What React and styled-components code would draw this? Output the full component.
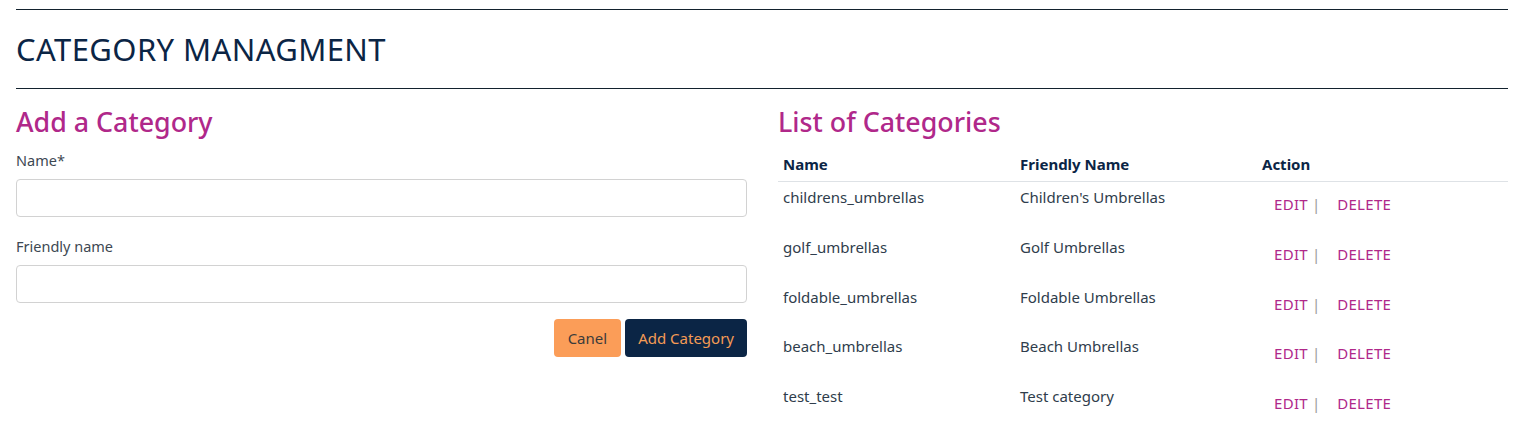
import React from "react";
import styled, { createGlobalStyle } from "styled-components";

const GlobalStyle = createGlobalStyle`
  body {
    margin: 0;
    background: #ffffff;
    font-family: "Noto Sans", "Open Sans", sans-serif;
    color: #2b3a4a;
  }
`;

const Page = styled.div`
  width: 1492px;
  margin-left: 16px;
  padding-top: 9px;
`;

const Rule = styled.hr`
  margin: 0;
  border: 0;
  border-top: 1px solid #13222e;
`;

const Title = styled.h2`
  margin: 0;
  height: 78px;
  display: flex;
  align-items: center;
  font-size: 31px;
  font-weight: 400;
  color: #0b2545;
  letter-spacing: 0.4px;
`;

const Columns = styled.div`
  display: grid;
  grid-template-columns: 731px 730px;
  column-gap: 31px;
  padding-top: 16px;
`;

const Heading = styled.h3`
  margin: 0 0 ${(p) => p.gap || 8}px;
  font-size: 26.8px;
  font-weight: 500;
  line-height: 34px;
  color: #b0288a;
`;

const Form = styled.form`
  display: flex;
  flex-direction: column;
`;

const Label = styled.label`
  font-size: 14.5px;
  color: #3d4852;
  line-height: 22px;
  margin-bottom: 8px;
`;

const Input = styled.input`
  height: 38px;
  box-sizing: border-box;
  border: 1px solid #d2d2d2;
  border-radius: 4px;
  margin-bottom: 18px;
  padding: 0 12px;
  font-family: inherit;
  font-size: 15px;
`;

const Actions = styled.div`
  display: flex;
  justify-content: flex-end;
  gap: 4px;
  margin-top: -2px;
`;

const Button = styled.button`
  height: 38px;
  padding: 0 ${(p) => (p.primary ? 13 : 14)}px;
  border: 0;
  border-radius: 4px;
  font-family: inherit;
  font-size: 15px;
  background: ${(p) => (p.primary ? "#0b2545" : "#fb9d58")};
  color: ${(p) => (p.primary ? "#f49b55" : "#3b3b3b")};
`;

const Table = styled.div`
  display: grid;
  grid-template-columns: 237px 242px 1fr;
`;

const HeadCell = styled.div`
  font-size: 15px;
  font-weight: 700;
  color: #0b2545;
  padding: 6px 5px 6px;
  line-height: 22px;
  border-bottom: 1px solid #dee2e6;
`;

const Cell = styled.div`
  height: 49.8px;
  box-sizing: border-box;
  padding: ${(p) => (p.action ? "11px 5px 0 17px" : "4px 5px 0")};
  font-size: 15px;
  line-height: 22px;
  color: #2f3d4c;
`;

const ActionLink = styled.a`
  color: #b0288a;
  font-size: 15px;
  letter-spacing: 0.3px;
  text-decoration: none;
`;

const Divider = styled.span`
  color: #9a9a9a;
  margin: 0 17px 0 4px;
`;

const categories = [
  ["childrens_umbrellas", "Children's Umbrellas"],
  ["golf_umbrellas", "Golf Umbrellas"],
  ["foldable_umbrellas", "Foldable Umbrellas"],
  ["beach_umbrellas", "Beach Umbrellas"],
  ["test_test", "Test category"],
];

export default function App() {
  return (
    <>
      <GlobalStyle />
      <Page>
        <Rule />
        <Title>CATEGORY MANAGMENT</Title>
        <Rule />
        <Columns>
          <div>
            <Heading gap={10}>Add a Category</Heading>
            <Form onSubmit={(e) => e.preventDefault()}>
              <Label>Name*</Label>
              <Input type="text" />
              <Label>Friendly name</Label>
              <Input type="text" />
              <Actions>
                <Button type="button">Canel</Button>
                <Button type="submit" primary>
                  Add Category
                </Button>
              </Actions>
            </Form>
          </div>
          <div>
            <Heading>List of Categories</Heading>
            <Table>
              <HeadCell>Name</HeadCell>
              <HeadCell>Friendly Name</HeadCell>
              <HeadCell>Action</HeadCell>
              {categories.map(([name, friendly]) => (
                <React.Fragment key={name}>
                  <Cell>{name}</Cell>
                  <Cell>{friendly}</Cell>
                  <Cell action>
                    <ActionLink href="#">EDIT</ActionLink>
                    <Divider>|</Divider>
                    <ActionLink href="#">DELETE</ActionLink>
                  </Cell>
                </React.Fragment>
              ))}
            </Table>
          </div>
        </Columns>
      </Page>
    </>
  );
}
